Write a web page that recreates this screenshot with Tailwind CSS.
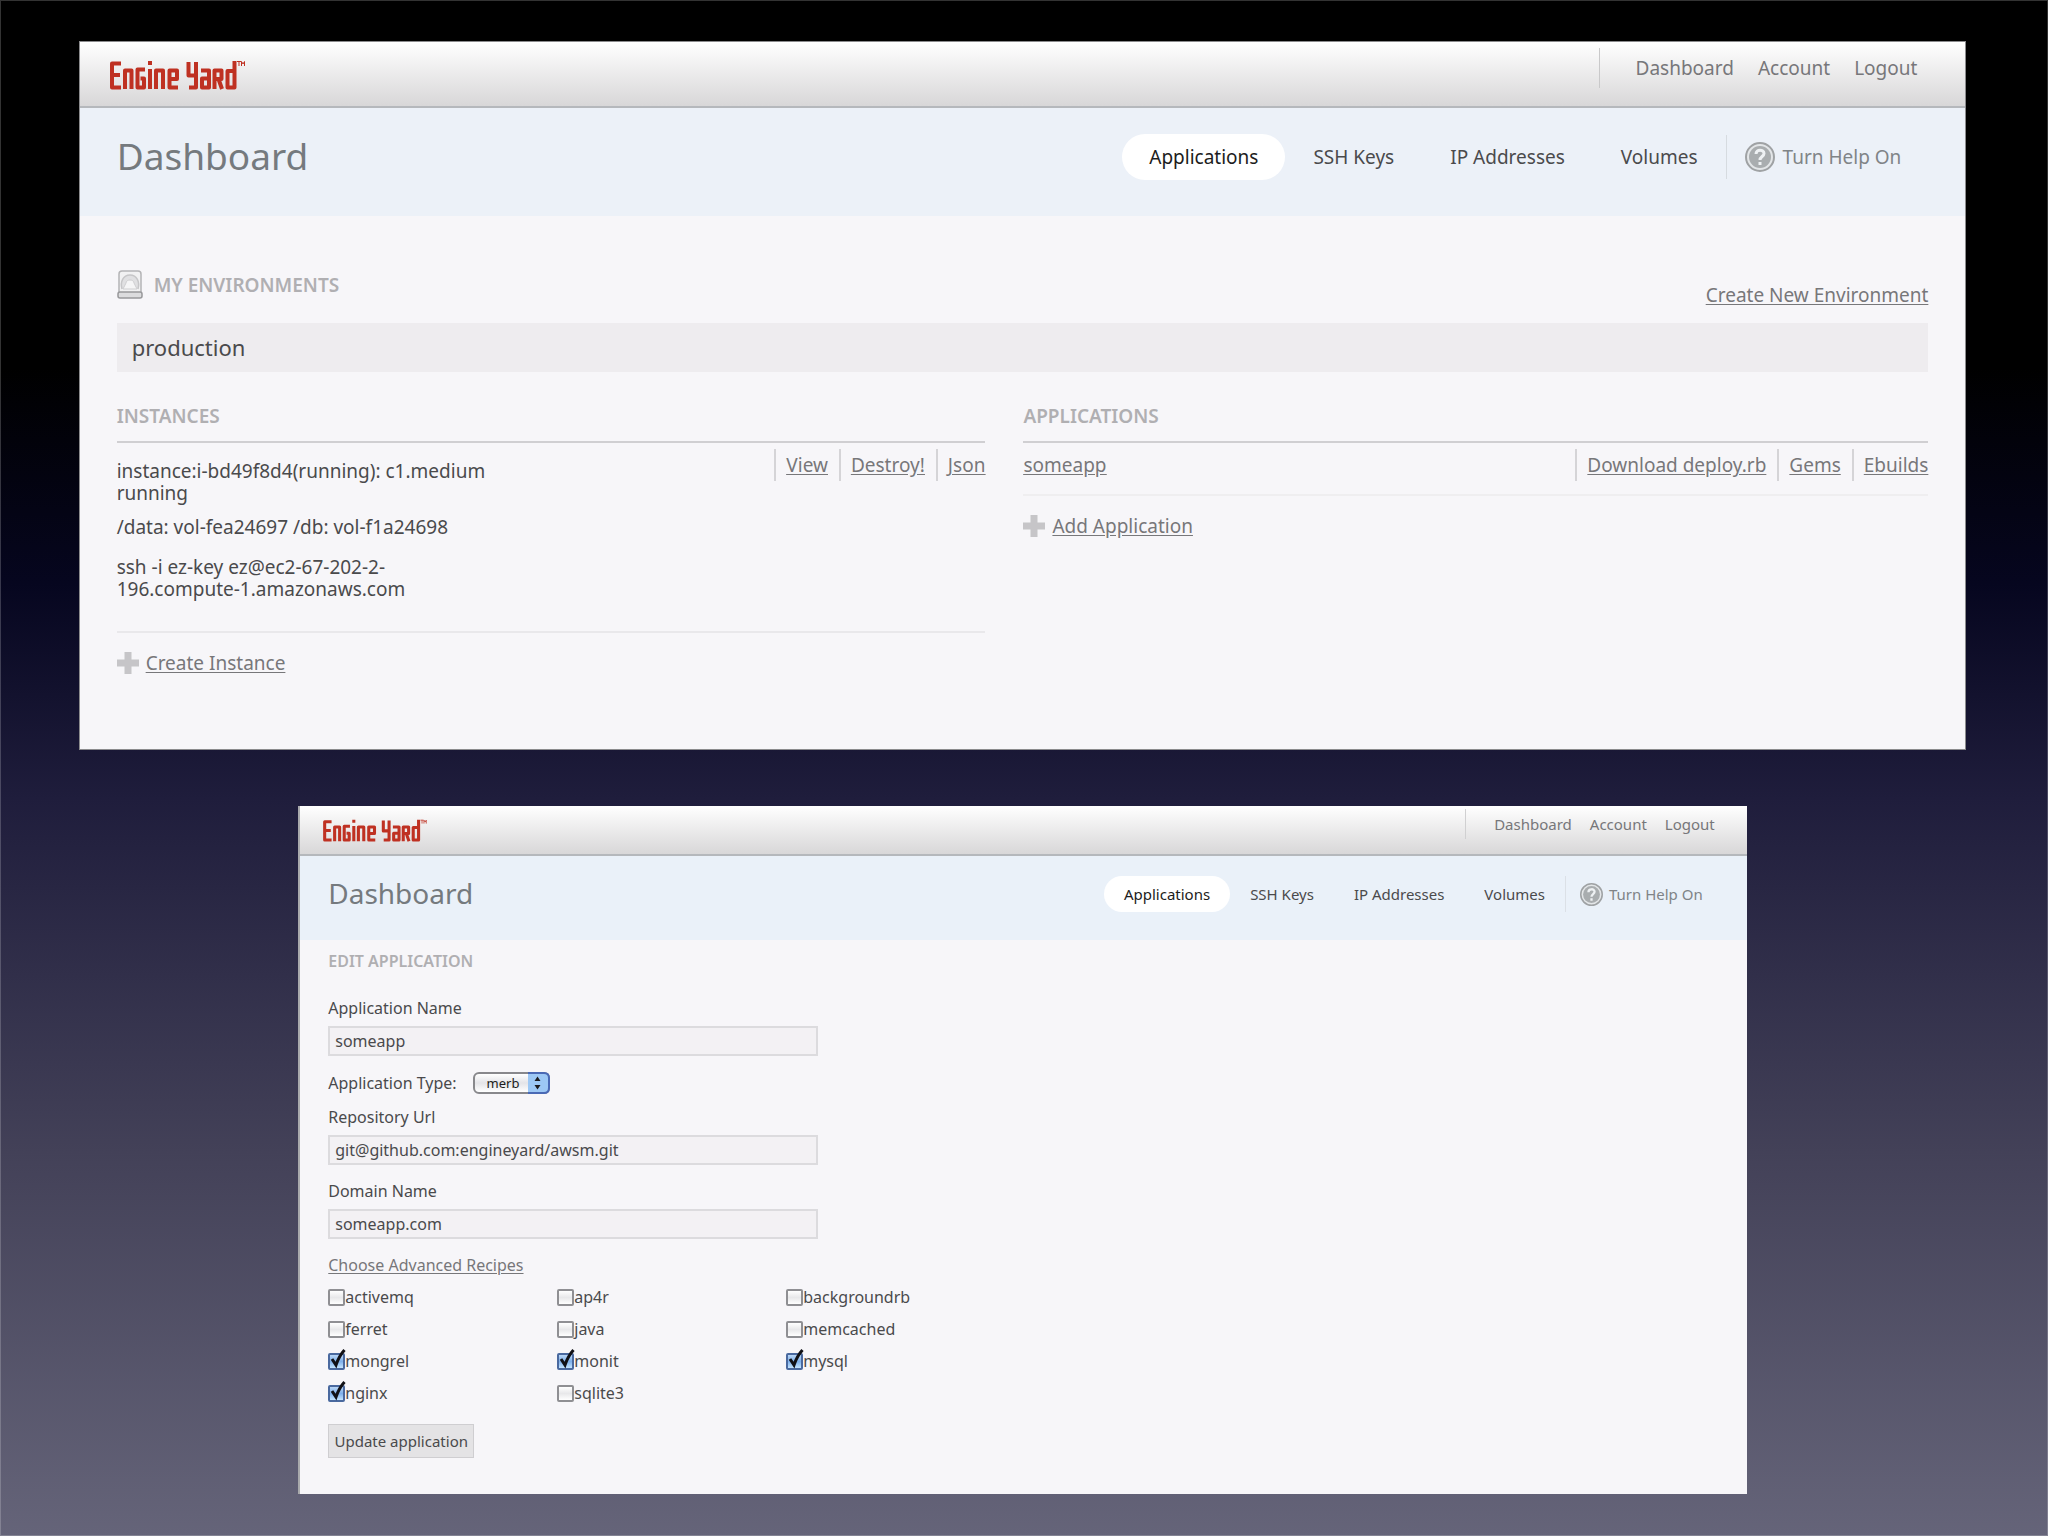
<!DOCTYPE html>
<html lang="en">
<head>
  <meta charset="UTF-8" />
  <meta name="viewport" content="width=device-width, initial-scale=1.0"/>
  <title>Engine Yard Dashboard</title>
  <script src="https://cdn.jsdelivr.net/npm/@tailwindcss/browser@4"></script>
</head>
<body class="min-h-screen flex flex-col items-center pt-10 pb-10 pr-[3px] border border-white/20 bg-[linear-gradient(#000_0%,#000_24%,#06061f_38%,#1f1d3c_52%,#434158_75%,#656479_100%)] bg-black font-['Noto_Sans',sans-serif] text-[#4a4a4c]">

  <svg class="hidden">
    <symbol id="logo" viewBox="0 0 136 30">
      <g fill="none" stroke="#bf3122" stroke-width="4" stroke-linejoin="round">
        <path d="M12 3.500H3V27.500H12M3 15H11"/>
        <path d="M16 29V10.500H22.500V29"/>
        <path d="M36 9.500H28.500V27.500H35V18.500H31.500"/>
        <path d="M41 9V29M41 1V5"/>
        <path d="M47 29V10.500H54V29"/>
        <path d="M69 27.500H60.500V10.500H68V19H60.500"/>
        <path d="M79.500 2V15.500H87V2M87 14V27.500H80"/>
        <path d="M92 10.500H100V27.500H93V18.500H100"/>
        <path d="M105.500 29V10.500H112.500V19H105.500M109.500 19L113 29"/>
        <path d="M125.500 1V27.500H118.500V11H125.500"/>
      </g>
      <path d="M128 1.500H132M130 1.500V6M132.500 6V1.500L134 4L135.500 1.500V6" fill="none" stroke="#bf3122"/>
    </symbol>
    <symbol id="help" viewBox="0 0 30 30">
      <circle cx="15" cy="15" r="14" fill="#e3e6e8" stroke="#9fa2a4" stroke-width="2"/>
      <circle cx="15" cy="15" r="11" fill="#a9adaf"/>
      <path d="M11 12C11 7 19 7 19 11.500C19 14.500 15 14.500 15 18M15 20V23" fill="none" stroke="#eef1f3" stroke-width="3"/>
    </symbol>
    <symbol id="plus" viewBox="0 0 22 22">
      <path d="M7.500 0H14.500V7.500H22V14.500H14.500V22H7.500V14.500H0V7.500H7.500Z" fill="#c6c5c8"/>
    </symbol>
  </svg>

  <!-- Environments -->
  <section class="w-[92.4%] min-h-[709px] bg-[#f7f6f9] border border-[#8b8b8d] text-[19px]">
    <header class="h-[66px] flex justify-between bg-linear-to-b from-white to-[#d8d7d8] border-b-2 border-[#b5b8bc] pl-7 pr-12">
      <svg class="w-[138px] h-[30px] mt-[18px]" role="img" aria-label="Engine Yard"><use href="#logo"/></svg>
      <nav class="h-10 mt-[6px] flex items-center gap-6 border-l border-[#c9c9ca] pl-9 text-[#77777a]">
        <a href="#">Dashboard</a>
        <a href="#">Account</a>
        <a href="#">Logout</a>
      </nav>
    </header>
    <div class="h-[108px] flex items-start justify-between bg-[#ecf1f8] pl-[37px] pr-16 pt-[26px]">
      <h1 class="text-[37px] leading-[43px] text-[#757a7e]">Dashboard</h1>
      <nav class="h-[46px] flex items-center">
        <a href="#" class="h-[46px] leading-[46px] rounded-full bg-white px-[27px] text-[#1c1c20]">Applications</a>
        <a href="#" class="px-7">SSH Keys</a>
        <a href="#" class="px-7">IP Addresses</a>
        <a href="#" class="px-7">Volumes</a>
        <a href="#" class="h-11 flex items-center gap-2 border-l border-[#d6dbe0] pl-[18px] text-[#808487]">
          <svg class="size-[30px]"><use href="#help"/></svg>
          Turn Help On
        </a>
      </nav>
    </div>

    <div class="px-[37px] pt-[53px]">
      <div class="h-[54px] flex justify-between">
        <h2 class="h-8 flex items-center gap-[11px] font-semibold text-[#b0afb2]">
          <svg class="w-[26px] h-[30px]" viewBox="0 0 26 30">
            <rect x="2" y="1" width="22" height="26" rx="3" fill="#f1f1f2" stroke="#b4b4b6" stroke-width="1.500"/>
            <path d="M5 19C3 12 6 5 13 5S23 12 21 19" fill="#e0e0e2" stroke="#c6c6c8" stroke-width="1.500"/>
            <path d="M9 13C9 9 17 9 17 13L20 19H6Z" fill="#f5f5f6" stroke="#cfcfd1"/>
            <rect x="1" y="22" width="24" height="6" rx="2" fill="#dcdcde" stroke="#98989b" stroke-width="1.500"/>
          </svg>
          MY ENVIRONMENTS
        </h2>
        <a href="#" class="mt-3 text-[#77777a] underline underline-offset-2">Create New Environment</a>
      </div>
      <h3 class="h-[49px] leading-[49px] bg-[#eeecef] px-[15px] text-[22px]">production</h3>

      <div class="mt-7 grid grid-cols-[48fr_50fr] gap-[38px]">
        <div>
          <h2 class="h-[43px] leading-8 border-b-2 border-[#d0cfd2] font-semibold text-[#b0afb2]">INSTANCES</h2>
          <div class="h-[190px] flex justify-between border-b-2 border-[#e9e8eb] pt-1.5">
            <div class="w-[380px] pt-[11px] leading-[22px]">
              <p>instance:i-bd49f8d4(running): c1.medium running</p>
              <p class="mt-3">/data: vol-fea24697 /db: vol-f1a24698</p>
              <p class="mt-[18px]">ssh -i ez-key ez@ec2-67-202-2-196.compute-1.amazonaws.com</p>
            </div>
            <div class="flex gap-[11px] leading-8 text-[#77777a] underline underline-offset-2">
              <a href="#" class="h-8 border-l-2 border-[#d5d4d7] pl-2.5">View</a>
              <a href="#" class="h-8 border-l-2 border-[#d5d4d7] pl-2.5">Destroy!</a>
              <a href="#" class="h-8 border-l-2 border-[#d5d4d7] pl-2.5">Json</a>
            </div>
          </div>
          <a href="#" class="mt-[14px] flex items-center gap-[7px] leading-8 text-[#77777a] underline underline-offset-2">
            <svg class="size-[22px]"><use href="#plus"/></svg>
            Create Instance
          </a>
        </div>
        <div>
          <h2 class="h-[43px] leading-8 border-b-2 border-[#d0cfd2] font-semibold text-[#b0afb2]">APPLICATIONS</h2>
          <div class="h-[53px] flex justify-between border-b-2 border-[#efeef0] pt-1.5 leading-8 text-[#77777a] underline underline-offset-2">
            <a href="#">someapp</a>
            <div class="flex gap-[11px]">
              <a href="#" class="h-8 border-l-2 border-[#d5d4d7] pl-2.5">Download deploy.rb</a>
              <a href="#" class="h-8 border-l-2 border-[#d5d4d7] pl-2.5">Gems</a>
              <a href="#" class="h-8 border-l-2 border-[#d5d4d7] pl-2.5">Ebuilds</a>
            </div>
          </div>
          <a href="#" class="mt-[14px] flex items-center gap-[7px] leading-8 text-[#77777a] underline underline-offset-2">
            <svg class="size-[22px]"><use href="#plus"/></svg>
            Add Application
          </a>
        </div>
      </div>
    </div>
  </section>

  <!-- Edit application -->
  <section class="mt-14 w-[70.9%] min-h-[688px] bg-[#f7f6f9] border-l-2 border-[#a9aaac] text-[15px]">
    <header class="h-[50px] flex justify-between bg-linear-to-b from-white to-[#d8d7d8] border-b-2 border-[#b5b8bc] pl-[21px] pr-8">
      <svg class="w-[107px] h-[23px] mt-[13px]" role="img" aria-label="Engine Yard"><use href="#logo"/></svg>
      <nav class="h-[30px] mt-[3px] flex items-center gap-[18px] border-l border-[#d0d0d1] pl-7 text-[#77777a]">
        <a href="#">Dashboard</a>
        <a href="#">Account</a>
        <a href="#">Logout</a>
      </nav>
    </header>
    <div class="h-[84px] flex items-start justify-between bg-[#eaf1f9] pl-7 pr-11 pt-5">
      <h1 class="text-[28px] leading-[34px] text-[#757a7e]">Dashboard</h1>
      <nav class="h-9 flex items-center">
        <a href="#" class="h-9 leading-9 rounded-full bg-white px-5 text-[#1c1c20]">Applications</a>
        <a href="#" class="px-5">SSH Keys</a>
        <a href="#" class="px-5">IP Addresses</a>
        <a href="#" class="px-5">Volumes</a>
        <a href="#" class="h-9 flex items-center gap-1.5 border-l border-[#dbe0e6] pl-[14px] text-[#808487]">
          <svg class="size-[23px]"><use href="#help"/></svg>
          Turn Help On
        </a>
      </nav>
    </div>

    <form class="px-7 pt-2.5 text-base">
      <h2 class="h-[47px] leading-[22px] font-semibold text-[#b0afb2]">EDIT APPLICATION</h2>
      <div class="w-[490px] flex flex-col">
        <label for="name" class="leading-[22px]">Application Name</label>
        <input id="name" type="text" value="someapp" class="mt-[7px] h-[30px] border-2 border-[#dcdbde] bg-[#f3f1f4] px-[5px]"/>
        <div class="mt-3 h-[30px] flex items-center gap-4">
          <label for="type">Application Type:</label>
          <div class="relative h-[22px] flex">
            <select id="type" class="appearance-none w-[77px] h-[22px] rounded-md border-2 border-[#88888c] bg-linear-to-b from-white via-[#e4e4e8] to-white pl-3 text-[13px] leading-[18px] text-[#1c1c20]">
              <option>merb</option>
            </select>
            <svg class="pointer-events-none absolute right-0 top-0 w-[22px] h-[22px]" viewBox="0 0 22 22">
              <path d="M0 1H16Q21 1 21 6V16Q21 21 16 21H0Z" fill="#9dc8f5"/>
              <path d="M0 1H16Q21 1 21 6V16Q21 21 16 21H0" fill="none" stroke="#4a69b5" stroke-width="2"/>
              <path d="M6.500 9L9.500 4.500L12.500 9ZM6.500 13L9.500 17.500L12.500 13Z" fill="#1c1c20"/>
            </svg>
          </div>
        </div>
        <label for="repo" class="mt-2 leading-[22px]">Repository Url</label>
        <input id="repo" type="text" value="git@github.com:engineyard/awsm.git" class="mt-[7px] h-[30px] border-2 border-[#dcdbde] bg-[#f3f1f4] px-[5px]"/>
        <label for="domain" class="mt-[15px] leading-[22px]">Domain Name</label>
        <input id="domain" type="text" value="someapp.com" class="mt-[7px] h-[30px] border-2 border-[#dcdbde] bg-[#f3f1f4] px-[5px]"/>
      </div>
      <a href="#" class="mt-[15px] block w-fit leading-[22px] text-[#77777a] underline underline-offset-2">Choose Advanced Recipes</a>
      <div id="recipes" class="mt-[5px] w-[687px] grid grid-cols-3"></div>
      <button type="button" class="mt-[15px] h-[34px] w-[146px] border border-[#cfced1] bg-[#e4e3e5] text-[15px]">Update application</button>
    </form>
  </section>

  <script>
    const recipes = [
      ['activemq', false], ['ap4r', false], ['backgroundrb', false],
      ['ferret', false], ['java', false], ['memcached', false],
      ['mongrel', true], ['monit', true], ['mysql', true],
      ['nginx', true], ['sqlite3', false],
    ];

    document.getElementById('recipes').innerHTML = recipes.map(([name, on]) => `
      <label class="relative h-8 flex items-center">
        <input type="checkbox" ${on ? 'checked' : ''} class="peer appearance-none size-[17px] rounded-xs border-2 border-[#8f8f93] bg-linear-to-b from-white via-[#e8e8ea] to-white checked:border-[#4a699f] checked:from-[#b9d6f6] checked:via-[#7fb0ea] checked:to-[#c3e4ff]">
        <svg class="hidden peer-checked:block pointer-events-none absolute left-0 top-1 w-[18px] h-5" viewBox="0 0 18 20">
          <path d="M4 10L8 16Q11 7 16.500 1" fill="none" stroke="#111116" stroke-width="3"/>
        </svg>
        ${name}
      </label>`).join('');
  </script>
</body>
</html>
